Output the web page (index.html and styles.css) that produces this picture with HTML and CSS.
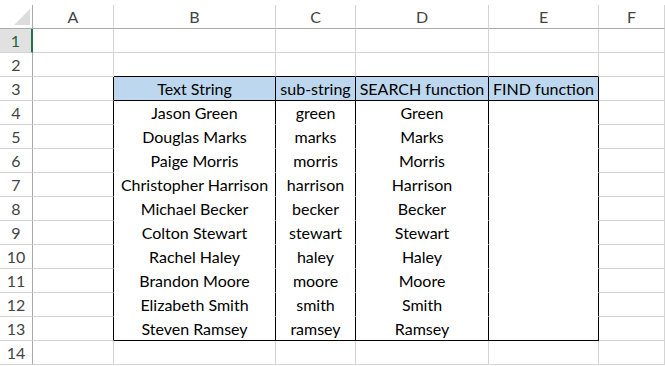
FILE: index.html
```html
<!DOCTYPE html>
<html>
<head>
<meta charset="utf-8">
<link rel="stylesheet" href="styles.css">
</head>
<body>
<div class="sheet">
  <div class="corner"><svg class="tri" width="17" height="17" viewBox="0 0 17 17"><polygon points="16,0 16,16 0,16" fill="#dcdcdc"/></svg></div>
  <div class="ch">A</div><div class="ch">B</div><div class="ch">C</div><div class="ch">D</div><div class="ch">E</div><div class="ch">F</div>

  <div class="rh sel">1</div><div class="c"></div><div class="c"></div><div class="c"></div><div class="c"></div><div class="c"></div><div class="c"></div>
  <div class="rh">2</div><div class="c"></div><div class="c tt"></div><div class="c tt"></div><div class="c tt"></div><div class="c tt"></div><div class="c"></div>
  <div class="rh">3</div><div class="c tl"></div><div class="c hd">Text String</div><div class="c hd">sub-string</div><div class="c hd">SEARCH function</div><div class="c hd">FIND function</div><div class="c"></div>
  <div class="rh">4</div><div class="c tl"></div><div class="c td">Jason Green</div><div class="c td">green</div><div class="c td">Green</div><div class="c td"></div><div class="c"></div>
  <div class="rh">5</div><div class="c tl"></div><div class="c td">Douglas Marks</div><div class="c td">marks</div><div class="c td">Marks</div><div class="c td"></div><div class="c"></div>
  <div class="rh">6</div><div class="c tl"></div><div class="c td">Paige Morris</div><div class="c td">morris</div><div class="c td">Morris</div><div class="c td"></div><div class="c"></div>
  <div class="rh">7</div><div class="c tl"></div><div class="c td">Christopher Harrison</div><div class="c td">harrison</div><div class="c td">Harrison</div><div class="c td"></div><div class="c"></div>
  <div class="rh">8</div><div class="c tl"></div><div class="c td">Michael Becker</div><div class="c td">becker</div><div class="c td">Becker</div><div class="c td"></div><div class="c"></div>
  <div class="rh">9</div><div class="c tl"></div><div class="c td">Colton Stewart</div><div class="c td">stewart</div><div class="c td">Stewart</div><div class="c td"></div><div class="c"></div>
  <div class="rh">10</div><div class="c tl"></div><div class="c td">Rachel Haley</div><div class="c td">haley</div><div class="c td">Haley</div><div class="c td"></div><div class="c"></div>
  <div class="rh">11</div><div class="c tl"></div><div class="c td">Brandon Moore</div><div class="c td">moore</div><div class="c td">Moore</div><div class="c td"></div><div class="c"></div>
  <div class="rh">12</div><div class="c tl"></div><div class="c td">Elizabeth Smith</div><div class="c td">smith</div><div class="c td">Smith</div><div class="c td"></div><div class="c"></div>
  <div class="rh">13</div><div class="c tl"></div><div class="c td last">Steven Ramsey</div><div class="c td last">ramsey</div><div class="c td last">Ramsey</div><div class="c td last"></div><div class="c"></div>
  <div class="rh">14</div><div class="c"></div><div class="c"></div><div class="c"></div><div class="c"></div><div class="c"></div><div class="c"></div>
</div>
</body>
</html>
```
FILE: styles.css
```css
html, body {
  margin: 0;
  padding: 0;
  background: #ffffff;
  overflow: hidden;
  height: 366px;
}
.sheet {
  display: grid;
  grid-template-columns: 33px 81px 162px 80px 133px 110px 1fr;
  grid-template-rows: 29px;
  grid-auto-rows: 24px;
  width: 665px;
  font-family: Lato, "Liberation Sans", sans-serif;
  font-size: 16px;
  line-height: 19px;
  color: #000;
}
.sheet > div {
  box-sizing: border-box;
  display: flex;
  align-items: flex-end;
  justify-content: center;
  padding-bottom: 2px;
  white-space: nowrap;
  overflow: hidden;
}
.corner {
  border-bottom: 1px solid #ababab;
  border-right: 1px solid transparent;
  background: linear-gradient(#ababab, #ababab) no-repeat right bottom / 1px 24px;
  background-origin: border-box;
  justify-content: flex-end !important;
  padding: 0 1px 2px 0 !important;
}
.tri { display: block; }
.ch {
  color: #444;
  border-bottom: 1px solid #ababab;
  border-right: 1px solid transparent;
  background: linear-gradient(#d4d4d4, #d4d4d4) no-repeat right bottom / 1px 24px;
  background-origin: border-box;
}
.rh {
  color: #444;
  border-right: 1px solid #ababab;
  border-bottom: 1px solid #d4d4d4;
}
.rh.sel {
  background: #e1e1e1;
  color: #21613d;
  border-right: 2px solid #217346;
}
.c {
  border-right: 1px solid #d4d4d4;
  border-bottom: 1px solid #d4d4d4;
}
.c.tt { border-bottom-color: #000; }
.c.tl { border-right-color: #000; }
.c.hd {
  background: #bdd7ee;
  border-right-color: #000;
  border-bottom-color: #000;
}
.c.td {
  border-right-color: #000;
  border-bottom-color: #fff;
}
.c.td.last { border-bottom-color: #000; }
```
